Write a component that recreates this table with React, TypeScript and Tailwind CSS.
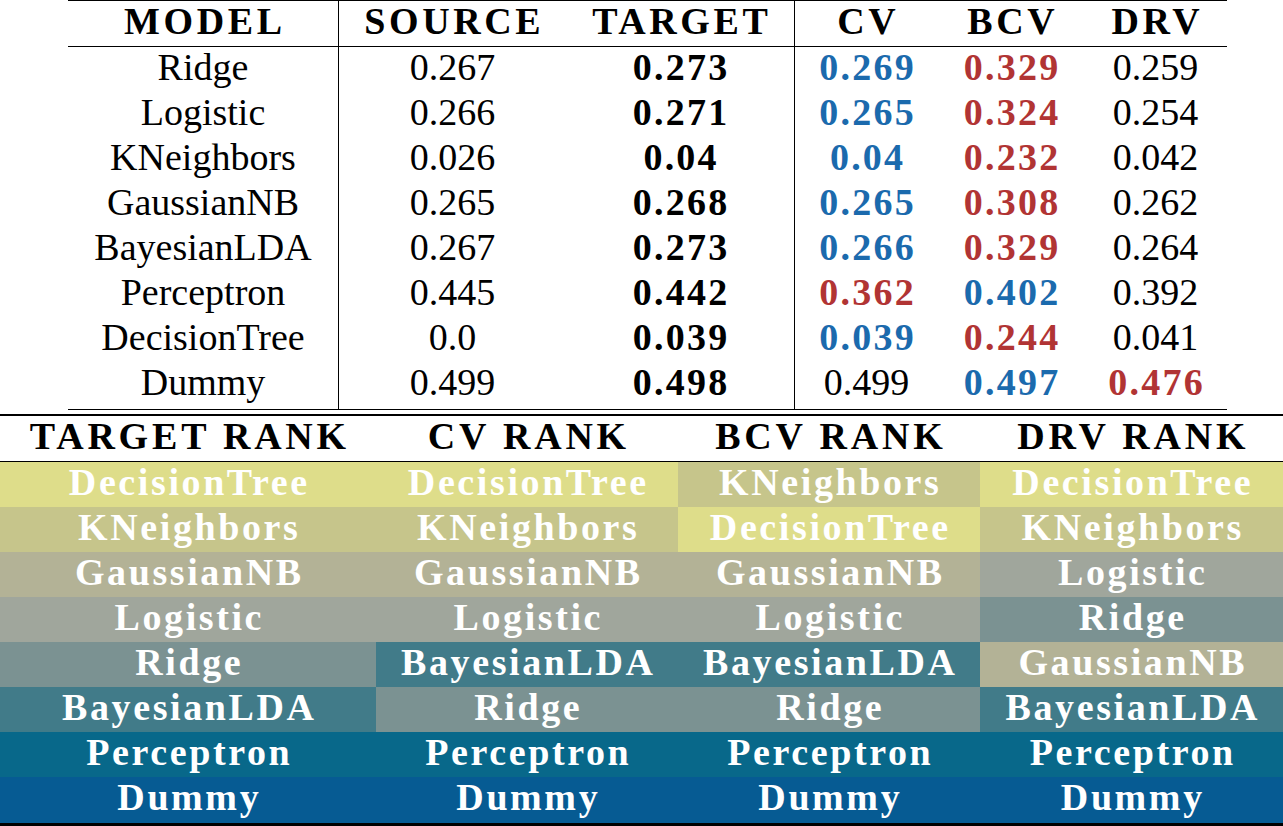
import React from "react";

const rows = [
  ["Ridge", "0.267", "0.273", "0.269", "0.329", "0.259", "b", "r", ""],
  ["Logistic", "0.266", "0.271", "0.265", "0.324", "0.254", "b", "r", ""],
  ["KNeighbors", "0.026", "0.04", "0.04", "0.232", "0.042", "b", "r", ""],
  ["GaussianNB", "0.265", "0.268", "0.265", "0.308", "0.262", "b", "r", ""],
  ["BayesianLDA", "0.267", "0.273", "0.266", "0.329", "0.264", "b", "r", ""],
  ["Perceptron", "0.445", "0.442", "0.362", "0.402", "0.392", "r", "b", ""],
  ["DecisionTree", "0.0", "0.039", "0.039", "0.244", "0.041", "b", "r", ""],
  ["Dummy", "0.499", "0.498", "0.499", "0.497", "0.476", "", "b", "r"],
];

const colorOf: Record<string, string> = {
  DecisionTree: "bg-[#dedd8a]",
  KNeighbors: "bg-[#c6c58b]",
  GaussianNB: "bg-[#b3b296]",
  Logistic: "bg-[#a0a69c]",
  Ridge: "bg-[#7b9292]",
  BayesianLDA: "bg-[#417b89]",
  Perceptron: "bg-[#08688a]",
  Dummy: "bg-[#065b93]",
};

const ranks = [
  { title: "TARGET RANK", order: ["DecisionTree", "KNeighbors", "GaussianNB", "Logistic", "Ridge", "BayesianLDA", "Perceptron", "Dummy"] },
  { title: "CV RANK", order: ["DecisionTree", "KNeighbors", "GaussianNB", "Logistic", "BayesianLDA", "Ridge", "Perceptron", "Dummy"] },
  { title: "BCV RANK", order: ["KNeighbors", "DecisionTree", "GaussianNB", "Logistic", "BayesianLDA", "Ridge", "Perceptron", "Dummy"] },
  { title: "DRV RANK", order: ["DecisionTree", "KNeighbors", "Logistic", "Ridge", "GaussianNB", "BayesianLDA", "Perceptron", "Dummy"] },
];

function colored(v: string, mark: string) {
  if (mark === "b") return <span className="font-[Liberation_Serif] font-bold tracking-[2.2px] pl-[2.2px] text-[#1b6aad]">{v}</span>;
  if (mark === "r") return <span className="font-[Liberation_Serif] font-bold tracking-[2.2px] pl-[2.2px] text-[#b13434]">{v}</span>;
  return <span className="font-[Liberation_Serif]">{v}</span>;
}

const cell = "font-[Liberation_Serif] h-[45px] leading-[40px] text-center whitespace-nowrap";
const head = "font-[Liberation_Serif] h-[45px] leading-[40px] text-center whitespace-nowrap font-bold tracking-[3.6px] pl-[3.6px]";

export default function App() {
  return (
    <div className="font-serif w-[1283px] h-[826px] bg-white overflow-hidden text-[38px] text-black">
      <div className="ml-[68px] w-[1159px] border-t border-black">
        <div className="grid grid-cols-[271px_227px_229px_143px_146px_143px] border-b border-black">
          <div className={`${head} border-r border-black`}>MODEL</div>
          <div className={head}>SOURCE</div>
          <div className={`${head} border-r border-black`}>TARGET</div>
          <div className={head}>CV</div>
          <div className={head}>BCV</div>
          <div className={head}>DRV</div>
        </div>
        <div className="grid grid-cols-[271px_227px_229px_143px_146px_143px] border-b border-black">
          <div className="border-r border-black pb-[2px]">
            {rows.map((r) => (
              <div key={r[0]} className={cell}>{r[0]}</div>
            ))}
          </div>
          <div className="pb-[2px]">
            {rows.map((r) => (
              <div key={r[0]} className={cell}>{r[1]}</div>
            ))}
          </div>
          <div className="border-r border-black pb-[2px]">
            {rows.map((r) => (
              <div key={r[0]} className={cell}>
                <span className="font-[Liberation_Serif] font-bold tracking-[2.2px] pl-[2.2px]">{r[2]}</span>
              </div>
            ))}
          </div>
          <div className="pb-[2px]">
            {rows.map((r) => (
              <div key={r[0]} className={cell}>{colored(r[3], r[6])}</div>
            ))}
          </div>
          <div className="pb-[2px]">
            {rows.map((r) => (
              <div key={r[0]} className={cell}>{colored(r[4], r[7])}</div>
            ))}
          </div>
          <div className="pb-[2px]">
            {rows.map((r) => (
              <div key={r[0]} className={cell}>{colored(r[5], r[8])}</div>
            ))}
          </div>
        </div>
      </div>
      <div className="h-[4px]" />
      <div className="border-t-2 border-black">
        <div className="grid grid-cols-[376px_302px_302px_303px] border-b border-black">
          {ranks.map((r) => (
            <div key={r.title} className="font-[Liberation_Serif] h-[45px] leading-[40px] text-center font-bold tracking-[3.8px] pl-[3.8px] whitespace-nowrap">
              {r.title}
            </div>
          ))}
        </div>
        <div className="grid grid-cols-[376px_302px_302px_303px] border-b-[3px] border-black">
          {ranks.map((r) => (
            <div key={r.title} className="flex flex-col">
              {r.order.map((m) => (
                <div
                  key={m}
                  className={`font-[Liberation_Serif] ${m === "Dummy" ? "h-[46px]" : "h-[45px]"} leading-[40px] text-center font-bold text-white tracking-[2.6px] pl-[2.6px] whitespace-nowrap ${colorOf[m]}`}
                >
                  {m}
                </div>
              ))}
            </div>
          ))}
        </div>
      </div>
    </div>
  );
}
